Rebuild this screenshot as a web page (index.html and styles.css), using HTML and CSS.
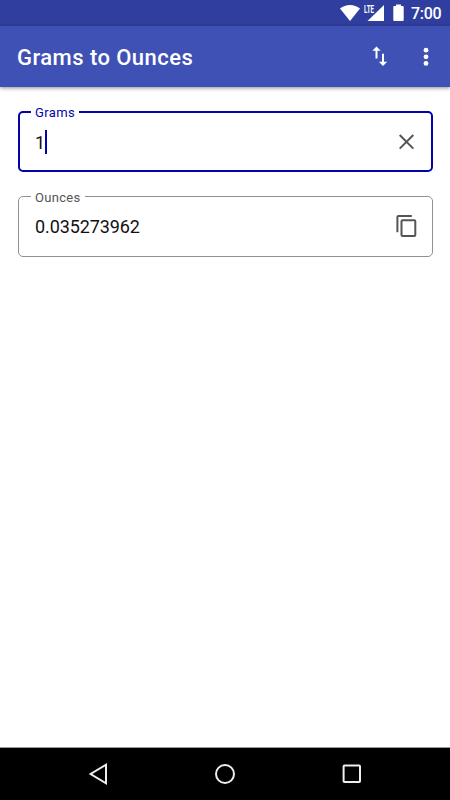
FILE: index.html
```html
<!DOCTYPE html>
<html lang="en">
<head>
    <meta charset="UTF-8">
    <meta name="viewport" content="width=device-width, initial-scale=1.0">
    <title>Grams to Ounces</title>
    <link rel="stylesheet" href="styles.css">
</head>
<body>

    <div class="status-bar">
        <svg class="wifi" width="20" height="16" viewBox="0 0 20 16">
            <path d="M10 16 L0 3.6 Q4.5 0 10 0 T20 3.6 Z"/>
        </svg>
        <div class="signal">
            <span class="lte">LTE</span>
            <svg width="17" height="16" viewBox="0 0 17 16"><path d="M17 0 V16 H0.5 Z"/></svg>
        </div>
        <svg class="battery" width="11" height="17" viewBox="0 0 11 17">
            <path d="M3 0.5 H8 V2 H9.8 Q10.7 2 10.7 3 V16 Q10.7 17 9.8 17 H1.2 Q0.3 17 0.3 16 V3 Q0.3 2 1.2 2 H3 Z"/>
        </svg>
        <span class="clock">7:00</span>
    </div>

    <header class="app-bar">
        <h1>Grams to Ounces</h1>
        <button type="button" class="swap" aria-label="Swap">
            <svg width="16" height="21" viewBox="0 0 16 21">
                <path d="M4.5 0.5 L8.7 4.8 H5.5 V12.5 H3.5 V4.8 H0.3 Z M10 7.8 H12 V15.8 H15.2 L11 20 L6.8 15.8 H10 Z"/>
            </svg>
        </button>
        <button type="button" class="more" aria-label="More">
            <svg width="6" height="20" viewBox="0 0 6 20">
                <circle cx="3" cy="3.2" r="2.4"/>
                <circle cx="3" cy="9.8" r="2.4"/>
                <circle cx="3" cy="16.4" r="2.4"/>
            </svg>
        </button>
    </header>

    <main>
        <fieldset class="field active">
            <legend>Grams</legend>
            <div class="field-row">
                <span class="value">1</span><span class="cursor"></span>
                <svg class="clear" width="16" height="16" viewBox="0 0 16 16">
                    <path d="M0.7 1 L14.3 14.6 M14.3 1 L0.7 14.6"/>
                </svg>
            </div>
        </fieldset>
        <fieldset class="field">
            <legend>Ounces</legend>
            <div class="field-row">
                <span class="value">0.035273962</span>
                <svg class="copy" width="20" height="23" viewBox="0 0 20 23">
                    <path d="M1.4 17.3 V2 Q1.4 1 2.4 1 H15.8"/>
                    <rect x="5.5" y="5.3" width="13.8" height="15.7" rx="1"/>
                </svg>
            </div>
        </fieldset>
    </main>

    <nav class="nav-bar">
        <svg width="20" height="22" viewBox="0 0 20 22"><path d="M18 1.7 V20.3 L2.6 11 Z"/></svg>
        <svg width="22" height="22" viewBox="0 0 22 22"><circle cx="11" cy="11" r="9"/></svg>
        <svg width="20" height="20" viewBox="0 0 20 20"><rect x="1.6" y="1.6" width="16.4" height="16.4" rx="0.8"/></svg>
    </nav>

</body>
</html>
```

FILE: styles.css
```css
* {
    box-sizing: border-box;
}
body {
    margin: 0;
    height: 800px;
    display: flex;
    flex-direction: column;
    font-family: Roboto, sans-serif;
    background-color: #fff;
    overflow: hidden;
}
svg {
    display: block;
    flex: none;
    overflow: visible;
}
.status-bar {
    display: flex;
    height: 26px;
    padding: 4px 9px 0 340px;
    background-color: #303f9f;
    color: #fff;
    fill: #fff;
}
.wifi {
    margin-top: 1px;
}
.signal {
    position: relative;
    margin: 1px 0 0 7px;
}
.lte {
    position: absolute;
    left: -3px;
    top: 0;
    font-size: 10px;
    font-weight: 700;
    line-height: 9px;
    transform: scaleX(0.62);
    transform-origin: left;
}
.battery {
    margin-left: 9px;
}
.clock {
    margin-left: 7px;
    font-size: 16px;
    line-height: 20px;
    font-weight: 500;
    letter-spacing: -0.3px;
    white-space: nowrap;
}
.app-bar {
    display: flex;
    align-items: center;
    height: 61px;
    padding: 0 21px 0 17px;
    background-color: #3f51b5;
    box-shadow: 0 1px 4px rgba(0, 0, 0, 0.45);
}
.app-bar h1 {
    margin: 2px 0 0;
    flex: 1;
    color: #fff;
    font-size: 22px;
    font-weight: 500;
    letter-spacing: 0.45px;
}
.app-bar button {
    padding: 0;
    border: none;
    background: none;
    fill: #fff;
    cursor: pointer;
}
.more {
    margin-left: 35px;
}
main {
    flex: 1;
    padding: 17px 17px 0 18px;
}
.field {
    height: 69px;
    margin: 0 0 15px;
    padding: 0 16px 0 12px;
    border: 1px solid #919191;
    border-radius: 5px;
}
.field.active {
    height: 68px;
    margin-bottom: 16px;
    padding: 0 16px 0 11px;
    border: 2px solid #0303a9;
}
.field legend {
    height: 16px;
    padding: 0 4px;
    color: #555;
    font-size: 13px;
    line-height: 19px;
    letter-spacing: 0.3px;
}
.field.active legend {
    color: #0303a9;
    line-height: 17px;
    letter-spacing: 0.4px;
}
.field-row {
    display: flex;
    align-items: center;
    height: 44px;
    padding-left: 4px;
}
.value {
    color: #111;
    font-size: 18px;
    letter-spacing: -0.1px;
}
.cursor {
    width: 2px;
    height: 24px;
    background-color: #0303a9;
}
.clear,
.copy {
    margin-left: auto;
    fill: none;
    stroke: #555;
    stroke-width: 2;
}
.nav-bar {
    display: flex;
    justify-content: space-between;
    align-items: center;
    height: 53px;
    padding: 0 88px;
    border-top: 1px solid #999;
    background-color: #000;
    fill: none;
    stroke: #eee;
    stroke-width: 2;
}
```
